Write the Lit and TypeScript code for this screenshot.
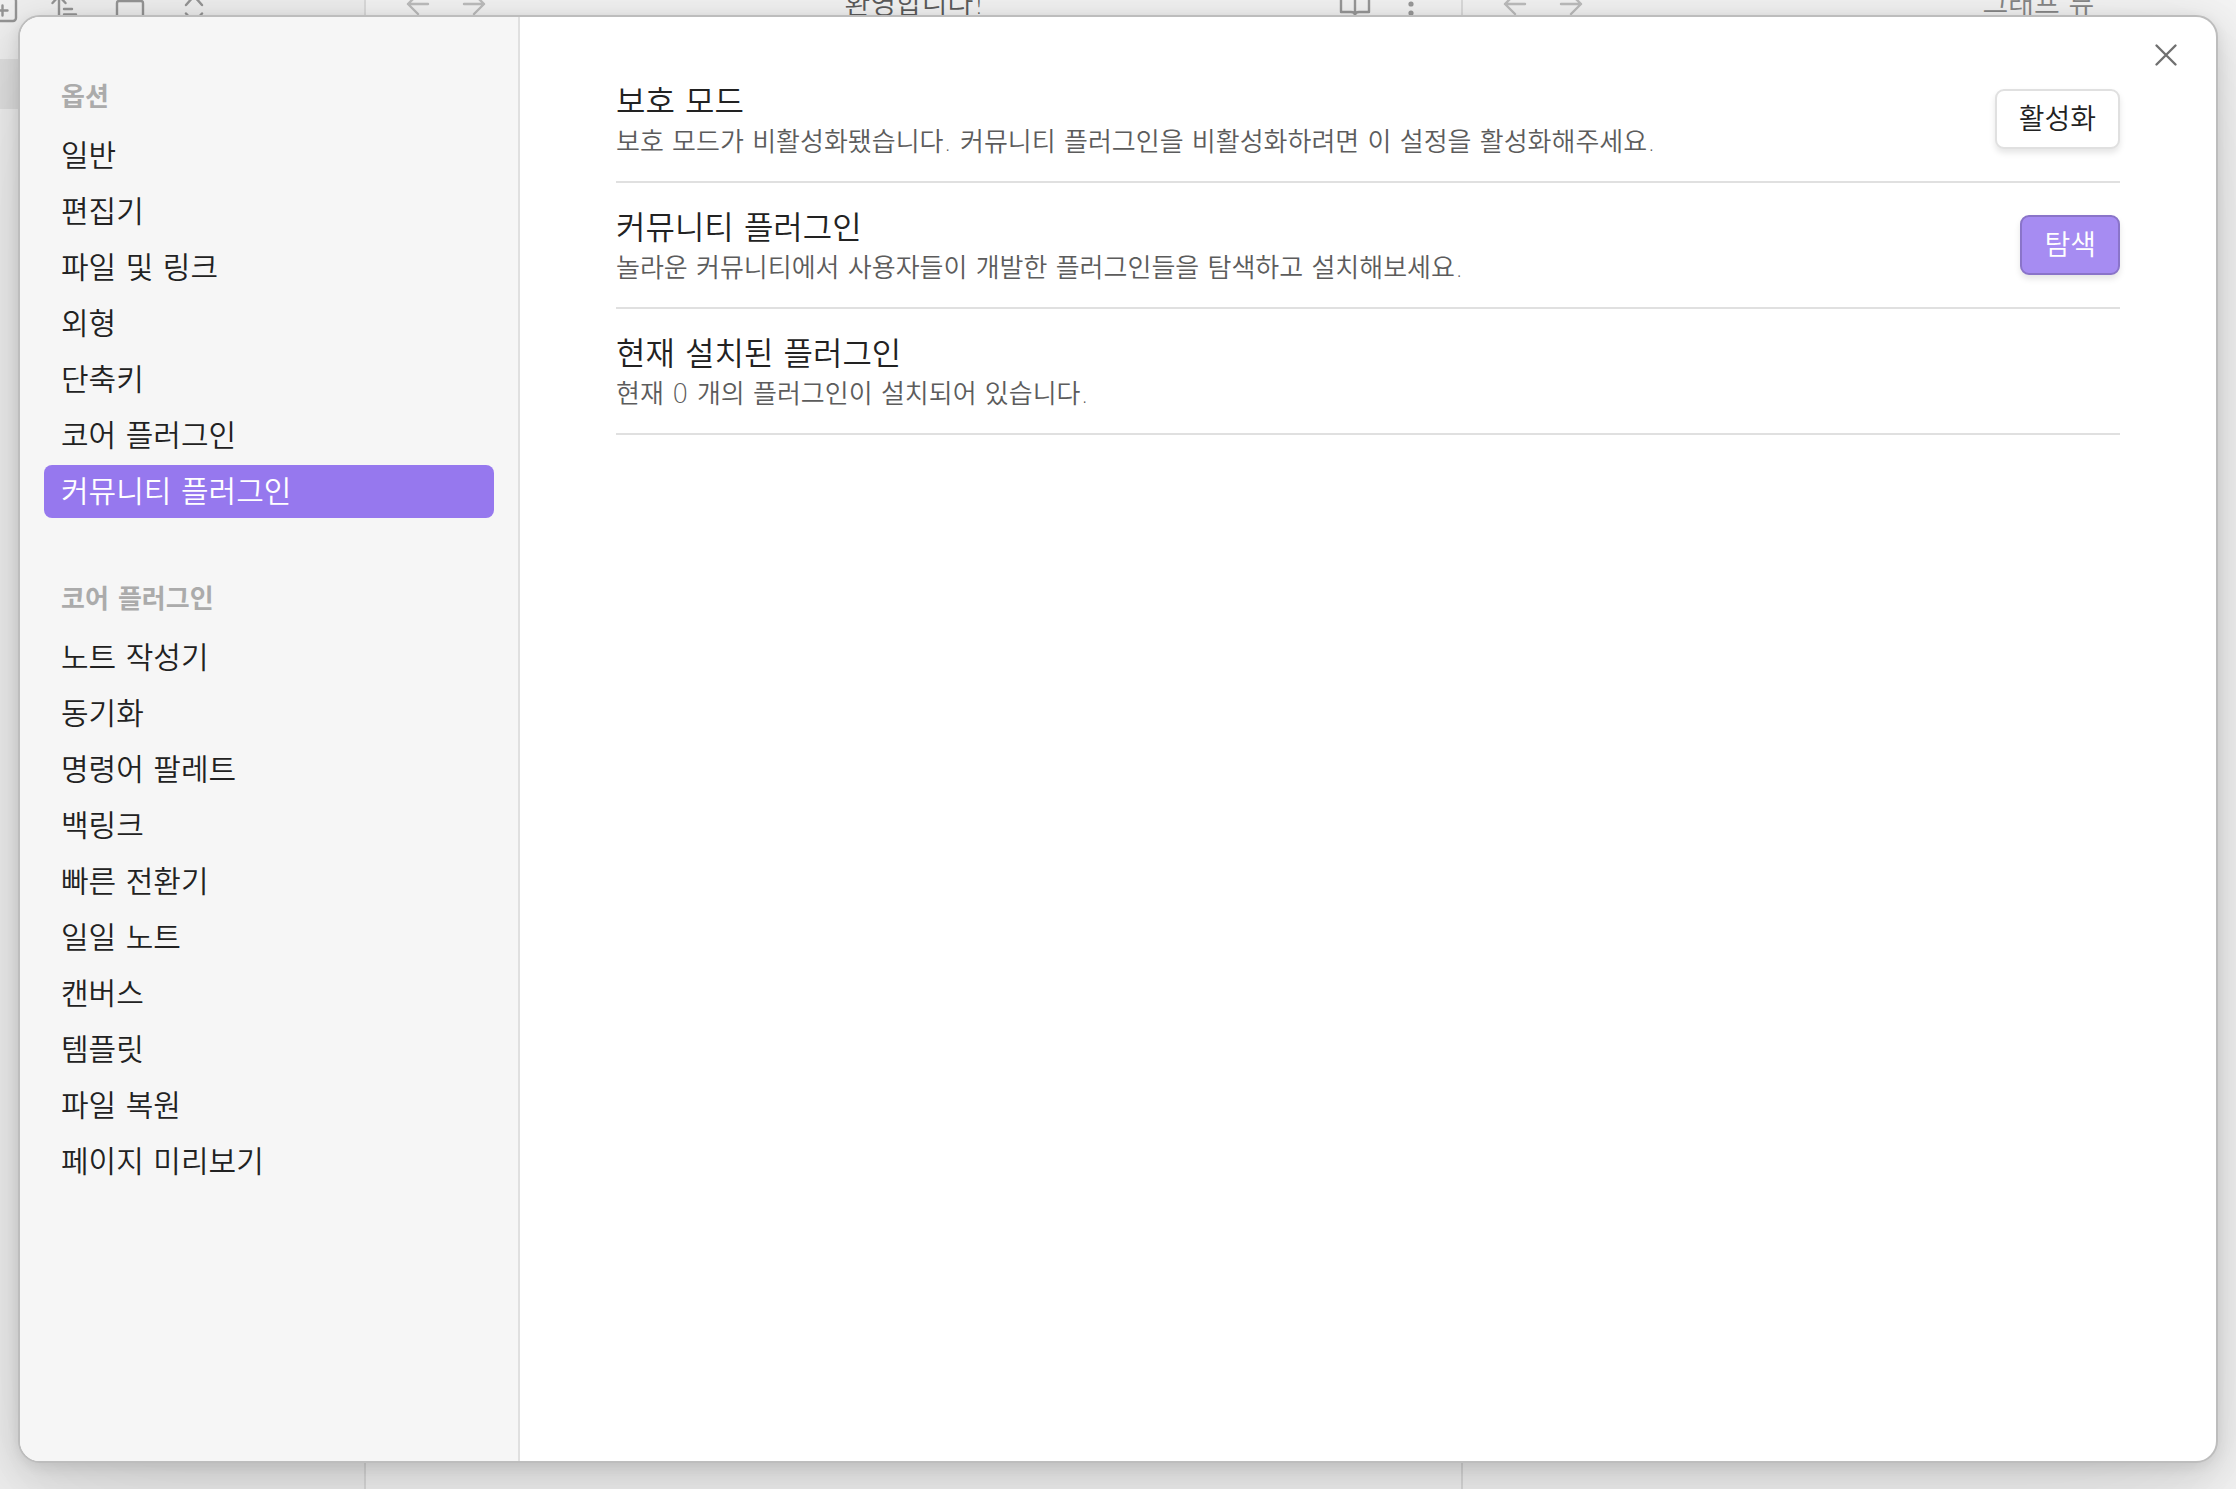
import { LitElement, html, css, svg } from "lit";
import { customElement, property, state } from "lit/decorators.js";
import { classMap } from "lit/directives/class-map.js";

interface NavGroup {
  title: string;
  items: string[];
}

interface Setting {
  name: string;
  description: string;
  action?: string;
  primary?: boolean;
}

const GROUPS: NavGroup[] = [
  {
    title: "옵션",
    items: ["일반", "편집기", "파일 및 링크", "외형", "단축키", "코어 플러그인", "커뮤니티 플러그인"],
  },
  {
    title: "코어 플러그인",
    items: [
      "노트 작성기",
      "동기화",
      "명령어 팔레트",
      "백링크",
      "빠른 전환기",
      "일일 노트",
      "캔버스",
      "템플릿",
      "파일 복원",
      "페이지 미리보기",
    ],
  },
];

const SETTINGS: Setting[] = [
  {
    name: "보호 모드",
    description: "보호 모드가 비활성화됐습니다. 커뮤니티 플러그인을 비활성화하려면 이 설정을 활성화해주세요.",
    action: "활성화",
  },
  {
    name: "커뮤니티 플러그인",
    description: "놀라운 커뮤니티에서 사용자들이 개발한 플러그인들을 탐색하고 설치해보세요.",
    action: "탐색",
    primary: true,
  },
  {
    name: "현재 설치된 플러그인",
    description: "현재 0 개의 플러그인이 설치되어 있습니다.",
  },
];

const ICONS = {
  add: svg`<rect x="3" y="4" width="27" height="23" rx="3"/><path d="M16.5 11.5v10M11.500 16.500h10"/>`,
  sort: svg`<path d="M9 32V10M2.500 17l6.500-7 6.500 7M14 23h8M14 28.500h12"/>`,
  panel: svg`<rect x="3" y="15" width="26" height="22" rx="2"/>`,
  collapse: svg`<path d="M8 19l8-9 8 9M8 27.500l8 9 8-9"/>`,
  back: svg`<path d="M26 16H6M16 6L6 16l10 10"/>`,
  forward: svg`<path d="M6 16h20M16 6l10 10-10 10"/>`,
  book: svg`<path d="M16 27c0-2-2-3-4-3H2V4h9c3 0 5 2 5 5zM16 27c0-2 2-3 4-3h10V4h-9c-3 0-5 2-5 5z"/>`,
  more: svg`<circle cx="16" cy="7" r="1.4"/><circle cx="16" cy="16" r="1.4"/><circle cx="16" cy="25" r="1.4"/>`,
};

const icon = (name: keyof typeof ICONS) =>
  html`<svg class="icon" viewBox="0 0 32 32" aria-hidden="true">${ICONS[name]}</svg>`;

@customElement("app-workspace")
export class AppWorkspace extends LitElement {
  static styles = css`
    :host {
      display: flex;
      flex: 1;
      min-width: 0;
      background: #f4f4f4;
      color: #5c5c5c;
    }
    .files {
      box-sizing: border-box;
      flex: none;
      width: 366px;
      border-right: 2px solid #dcdcdc;
      background: #efefef;
    }
    .pane {
      flex: 774;
      min-width: 0;
    }
    .pane.main {
      box-sizing: border-box;
      flex: 1096;
      border-right: 2px solid #dcdcdc;
    }
    .bar {
      display: flex;
      align-items: center;
      height: 8px;
    }
    .files .bar {
      gap: 32px;
      color: #959595;
      margin-left: -14px;
      height: 20px;
      margin-bottom: 39px;
    }
    .files .bar .icon:nth-child(n + 2) {
      margin-top: -16px;
    }
    .pane .bar {
      padding: 0 36px;
      gap: 24px;
    }
    .pane .bar.wide {
      margin-right: -376px;
    }
    .title {
      flex: 1;
      padding-top: 2px;
      text-align: center;
      font-size: 28px;
      line-height: 36px;
      white-space: nowrap;
    }
    .faint {
      color: #888;
    }
    .arrows {
      display: flex;
      gap: 24px;
      color: #bdbdbd;
    }
    .tools {
      display: flex;
      gap: 24px;
      width: 86px;
      color: #999;
    }
    .icon {
      flex: none;
      width: 32px;
      height: 32px;
      fill: none;
      stroke: currentColor;
      stroke-width: 2.4;
      stroke-linecap: round;
      stroke-linejoin: round;
    }
    .row {
      height: 50px;
      background: #dfdfdf;
    }
  `;

  render() {
    return html`
      <aside class="files">
        <div class="bar">${icon("add")}${icon("sort")}${icon("panel")}${icon("collapse")}</div>
        <div class="row"></div>
      </aside>
      <section class="pane main">
        <div class="bar">
          <div class="arrows">${icon("back")}${icon("forward")}</div>
          <div class="title">환영합니다!</div>
          <div class="tools">${icon("book")}${icon("more")}</div>
        </div>
      </section>
      <section class="pane">
        <div class="bar wide">
          <div class="arrows">${icon("back")}${icon("forward")}</div>
          <div class="title faint">그래프 뷰</div>
          <div class="tools"></div>
        </div>
      </section>
    `;
  }
}

@customElement("setting-item")
export class SettingItem extends LitElement {
  @property({ attribute: false }) setting!: Setting;

  static styles = css`
    :host {
      display: flex;
      align-items: center;
      gap: 32px;
      padding: 22px 0;
      border-bottom: 2px solid #e0e0e0;
    }
    :host(:first-of-type) {
      padding-top: 0;
    }
    .info {
      flex: 1;
      min-width: 0;
    }
    .name {
      margin: 0 0 2px;
      padding-top: 2px;
      font-size: 32px;
      line-height: 42px;
      font-weight: inherit;
      color: #222;
    }
    .description {
      margin: 0;
      font-size: 26px;
      line-height: 34px;
      color: #5c5c5c;
    }
    .action {
      flex: none;
      height: 60px;
      padding: 2px 22px 0;
      border: 2px solid #e0e0e0;
      border-radius: 9px;
      background: #fff;
      color: #222;
      font: inherit;
      font-size: 28px;
      line-height: 36px;
      box-shadow: 0 4px 6px rgba(0, 0, 0, 0.1);
      cursor: pointer;
    }
    .action.primary {
      border-color: #8a74c9;
      background: #a68cf2;
      color: #fff;
    }
  `;

  render() {
    const { name, description, action, primary } = this.setting;
    return html`
      <div class="info">
        <h2 class="name">${name}</h2>
        <p class="description">${description}</p>
      </div>
      ${action
        ? html`<button class=${classMap({ action: true, primary: !!primary })} type="button">${action}</button>`
        : null}
    `;
  }
}

@customElement("app-root")
export class AppRoot extends LitElement {
  @state() private active = "커뮤니티 플러그인";

  static styles = css`
    :host {
      position: relative;
      display: flex;
      min-height: 100vh;
      overflow: hidden;
      font-family: "DejaVu Sans", "Noto Sans CJK KR", sans-serif;
      font-weight: 350;
    }
    .modal {
      position: absolute;
      inset: 15px 18px 26px;
      display: flex;
      overflow: hidden;
      border: 2px solid #bdbdbd;
      border-radius: 22px;
      background: #fff;
      box-shadow:
        0 3px 13px rgba(0, 0, 0, 0.07),
        0 11px 44px rgba(0, 0, 0, 0.15),
        0 52px 158px rgba(0, 0, 0, 0.08);
    }
    .sidebar {
      box-sizing: border-box;
      flex: none;
      width: 500px;
      padding: 62px 24px;
      border-right: 2px solid #e0e0e0;
      background: #f6f6f6;
      overflow: hidden;
    }
    .group + .group {
      margin-top: 63px;
    }
    .heading {
      margin: 0 0 14px;
      padding: 0 17px;
      font-size: 26px;
      line-height: 36px;
      font-weight: 700;
      color: #ababab;
    }
    .list {
      display: flex;
      flex-direction: column;
      gap: 3px;
      margin: 0;
      padding: 0;
      list-style: none;
    }
    .item {
      display: block;
      width: 100%;
      height: 53px;
      padding: 0 17px;
      border: 0;
      border-radius: 8px;
      background: transparent;
      color: #222;
      font: inherit;
      font-size: 30px;
      line-height: 40px;
      text-align: left;
      cursor: pointer;
    }
    .item.active {
      background: #9678ee;
      color: #fff;
    }
    .content {
      flex: 1;
      min-width: 0;
      padding: 62px 96px;
      overflow: hidden;
    }
    .close {
      position: absolute;
      top: 20px;
      right: 32px;
      display: grid;
      place-items: center;
      width: 36px;
      height: 36px;
      padding: 0;
      border: 0;
      background: none;
      color: #707070;
      cursor: pointer;
    }
    .cross {
      width: 24px;
      height: 24px;
      fill: none;
      stroke: currentColor;
      stroke-width: 2.4;
      stroke-linecap: round;
    }
  `;

  render() {
    return html`
      <app-workspace></app-workspace>
      <div class="modal" role="dialog" aria-modal="true">
        <nav class="sidebar">
          ${GROUPS.map(
            (group) => html`
              <section class="group">
                <h2 class="heading">${group.title}</h2>
                <ul class="list">
                  ${group.items.map(
                    (item) => html`<li>
                      <button
                        type="button"
                        class=${classMap({ item: true, active: item === this.active })}
                        @click=${() => (this.active = item)}
                      >${item}</button>
                    </li>`,
                  )}
                </ul>
              </section>
            `,
          )}
        </nav>
        <main class="content">
          ${SETTINGS.map((setting) => html`<setting-item .setting=${setting}></setting-item>`)}
        </main>
        <button class="close" type="button" aria-label="닫기">
          <svg class="cross" viewBox="0 0 24 24" aria-hidden="true"><path d="M2.5 2.5l19 19M21.5 2.5l-19 19" /></svg>
        </button>
      </div>
    `;
  }
}
